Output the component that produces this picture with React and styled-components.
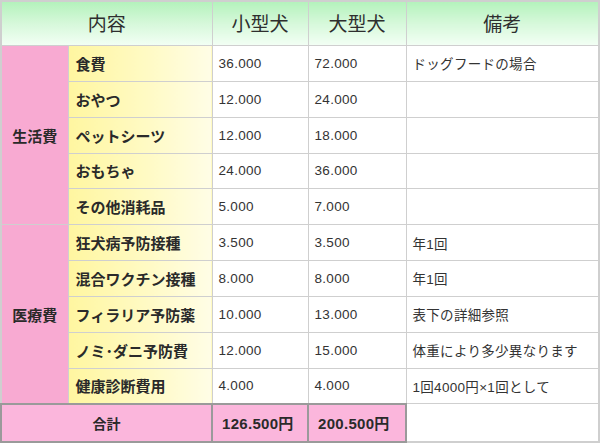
import React from "react";
import styled, { createGlobalStyle } from "styled-components";

const Global = createGlobalStyle`
  html, body { margin: 0; padding: 0; background: #fff; }
  body { font-family: "Liberation Sans", "Noto Sans CJK JP", sans-serif; color: #2a2a2a; }
`;

const Table = styled.table`
  width: 600px;
  height: 443px;
  border-collapse: collapse;
  border: 2px solid #cfcfcf;
  table-layout: fixed;
`;

const Cell = styled.td`
  border: 1px solid #cfcfcf;
  padding: 0;
  height: 35px;
  box-sizing: border-box;
`;

const HeadCell = styled.th`
  border: 1px solid #cfcfcf;
  height: 41px;
  padding: 0 0 2px;
  font-family: "Noto Sans CJK JP", sans-serif;
  font-weight: 400;
  font-size: 19px;
  color: #2e2e2e;
  text-align: center;
  background: linear-gradient(to bottom, #b4f2bc 0%, #d6f8da 50%, #f2fff4 100%);
`;

const CategoryCell = styled(Cell)`
  background: #f8aad2;
  font-family: "Noto Sans CJK JP", sans-serif;
  font-weight: 700;
  font-size: 15px;
  text-align: center;
  color: #2a2a2a;
`;

const ItemCell = styled(Cell)`
  background: linear-gradient(to right, #fff6a0 0%, #fffac4 55%, #fffde6 100%);
  font-family: "Noto Sans CJK JP", sans-serif;
  font-weight: 700;
  font-size: 15px;
  padding-left: 7px;
  color: #2a2a2a;
`;

const ValueCell = styled(Cell)`
  background: #fff;
  font-size: 13.5px;
  letter-spacing: 0.3px;
  padding-left: 6px;
  color: #333;
`;

const TotalLabel = styled(Cell)`
  border: 2px solid #9a9a9a;
  background: #fbb6dc;
  font-family: "Noto Sans CJK JP", sans-serif;
  font-weight: 700;
  font-size: 14px;
  text-align: center;
  height: 37px;
`;

const TotalValue = styled(TotalLabel)`
  text-align: left;
  padding-left: 9px;
  font-family: "Liberation Sans", "Noto Sans CJK JP", sans-serif;
  font-size: 15px;
  letter-spacing: 0.3px;
`;

const BlankCell = styled.td`
  border: none;
  background: #fff;
`;

const groups = [
  {
    name: "生活費",
    rows: [
      ["食費", "36.000", "72.000", "ドッグフードの場合"],
      ["おやつ", "12.000", "24.000", ""],
      ["ペットシーツ", "12.000", "18.000", ""],
      ["おもちゃ", "24.000", "36.000", ""],
      ["その他消耗品", "5.000", "7.000", ""],
    ],
  },
  {
    name: "医療費",
    rows: [
      ["狂犬病予防接種", "3.500", "3.500", "年1回"],
      ["混合ワクチン接種", "8.000", "8.000", "年1回"],
      ["フィラリア予防薬", "10.000", "13.000", "表下の詳細参照"],
      ["ノミ･ダニ予防費", "12.000", "15.000", "体重により多少異なります"],
      ["健康診断費用", "4.000", "4.000", "1回4000円×1回として"],
    ],
  },
];

export default function App() {
  return (
    <>
      <Global />
      <Table>
        <colgroup>
          <col style={{ width: 67 }} />
          <col style={{ width: 144 }} />
          <col style={{ width: 96 }} />
          <col style={{ width: 98 }} />
          <col />
        </colgroup>
        <thead>
          <tr>
            <HeadCell colSpan={2}>内容</HeadCell>
            <HeadCell>小型犬</HeadCell>
            <HeadCell>大型犬</HeadCell>
            <HeadCell>備考</HeadCell>
          </tr>
        </thead>
        <tbody>
          {groups.map((g) =>
            g.rows.map((r, i) => (
              <tr key={g.name + i}>
                {i === 0 && (
                  <CategoryCell rowSpan={g.rows.length}>{g.name}</CategoryCell>
                )}
                <ItemCell>{r[0]}</ItemCell>
                <ValueCell>{r[1]}</ValueCell>
                <ValueCell>{r[2]}</ValueCell>
                <ValueCell>{r[3]}</ValueCell>
              </tr>
            ))
          )}
          <tr>
            <TotalLabel colSpan={2}>合計</TotalLabel>
            <TotalValue>126.500円</TotalValue>
            <TotalValue>200.500円</TotalValue>
            <BlankCell />
          </tr>
        </tbody>
      </Table>
    </>
  );
}
